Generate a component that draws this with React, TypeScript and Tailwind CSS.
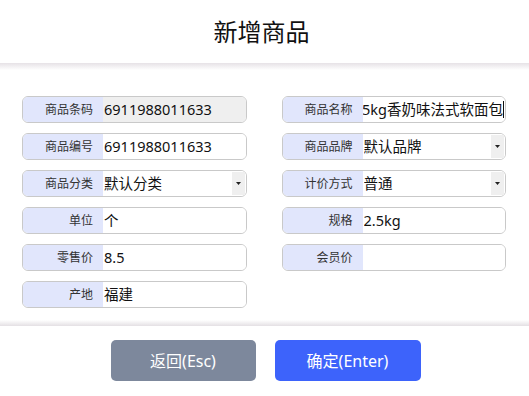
const fields = [
  { label: "商品条码", value: "6911988011633", readonly: true },
  { label: "商品名称", value: "2.5kg香奶味法式软面包", scrolled: true },
  { label: "商品编号", value: "6911988011633" },
  { label: "商品品牌", value: "默认品牌", select: true },
  { label: "商品分类", value: "默认分类", select: true },
  { label: "计价方式", value: "普通", select: true },
  { label: "单位", value: "个" },
  { label: "规格", value: "2.5kg" },
  { label: "零售价", value: "8.5" },
  { label: "会员价", value: "" },
  { label: "产地", value: "福建" },
];

type Field = {
  label: string;
  value: string;
  readonly?: boolean;
  select?: boolean;
  scrolled?: boolean;
};

function FormRow({ field }: { field: Field }) {
  return (
    <div className="flex h-[27px] rounded-[6px] border border-[#c9c9c9] overflow-hidden">
      <div className="w-[80px] shrink-0 bg-[#e1e6fc] flex items-center justify-end pr-[10px] text-[12px] text-[#333]">
        {field.label}
      </div>
      <div
        className={`relative flex-1 min-w-0 flex items-center overflow-hidden whitespace-nowrap text-[14.5px] text-[#111] ${
          field.readonly ? "bg-[#efefef]" : "bg-white"
        } ${field.scrolled ? "" : "pl-[1px]"}`}
      >
        {field.scrolled ? (
          <span className="absolute right-[1px] top-0 bottom-0 flex items-center">
            {field.value}
            <span className="inline-block w-px h-[17px] bg-[#111]" />
          </span>
        ) : (
          <span className="flex-1 min-w-0 truncate">{field.value}</span>
        )}
        {field.select && (
          <div className="w-[13px] self-stretch my-[1px] mr-[1px] bg-[#efefef] flex items-center justify-center">
            <svg width="5" height="3" viewBox="0 0 5 3">
              <path d="M0 0h5L2.5 3z" fill="#222" />
            </svg>
          </div>
        )}
      </div>
    </div>
  );
}

export default function App() {
  return (
    <div
      className="w-[529px] h-[396px] bg-white flex flex-col overflow-hidden"
      style={{ fontFamily: '"Noto Sans", "Noto Sans CJK SC", sans-serif' }}
    >
      {/* 标题 */}
      <div className="h-[63px] shrink-0 flex items-center justify-center pr-[6px] text-[24px] text-[#111]">
        新增商品
      </div>
      <div className="h-[7px] shrink-0 bg-gradient-to-b from-[#e6e2e6] to-white" />

      {/* 表单 */}
      <div className="flex-1 pt-[26px] pl-[22px] pr-[23px]">
        <div className="grid grid-cols-2 gap-x-[35px] gap-y-[10px]">
          {fields.map((f) => (
            <FormRow key={f.label} field={f} />
          ))}
        </div>
      </div>

      {/* 底部按钮 */}
      <div className="h-[6px] shrink-0 bg-gradient-to-b from-white to-[#e4e0e4]" />
      <div className="h-[70px] shrink-0 flex justify-center gap-[19px] pt-[14px] pl-[2px]">
        <button className="w-[145px] h-[41px] rounded-[5px] bg-[#7d889c] text-white text-[16px]">
          返回(Esc)
        </button>
        <button className="w-[146px] h-[41px] rounded-[5px] bg-[#3d63fb] text-white text-[16px]">
          确定(Enter)
        </button>
      </div>
    </div>
  );
}
